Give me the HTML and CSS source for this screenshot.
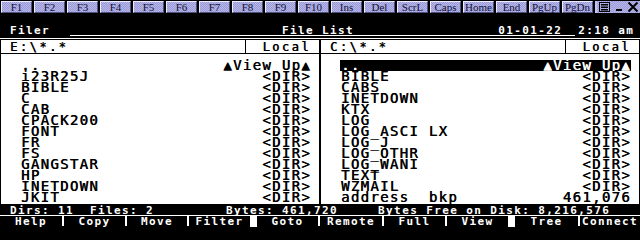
FILE: index.html
```html
<!DOCTYPE html>
<html>
<head>
<meta charset="utf-8">
<link rel="stylesheet" href="styles.css">
</head>
<body>
<div class="screen">
  <div class="toolbar">
    <span class="key">F1</span><span class="key">F2</span><span class="key">F3</span><span class="key">F4</span><span class="key">F5</span><span class="key">F6</span><span class="key">F7</span><span class="key">F8</span><span class="key">F9</span><span class="key">F10</span><span class="key">Ins</span><span class="key">Del</span><span class="key">ScrL</span><span class="key">Caps</span><span class="key">Home</span><span class="key">End</span><span class="key">PgUp</span><span class="key">PgDn</span>
    <div class="winctl">
      <span class="tsep"></span>
      <span class="wbtn menu"><svg width="15" height="12" viewBox="0 0 15 12"><rect x="2.5" y="1.5" width="10" height="9" fill="none" stroke="#000"/><rect x="4" y="3" width="7" height="1.5" fill="#000"/><rect x="4" y="5.5" width="7" height="1.5" fill="#000"/><rect x="4" y="8" width="7" height="1.5" fill="#000"/></svg></span>
      <span class="wbtn"><svg width="14" height="12" viewBox="0 0 14 12"><rect x="4" y="8" width="6" height="2" fill="#000"/></svg></span>
      <span class="wbtn"><svg width="14" height="12" viewBox="0 0 14 12"><path d="M2.5 1.5 L11.5 10.5 M11.5 1.5 L2.5 10.5" stroke="#000" stroke-width="2" fill="none"/></svg></span>
    </div>
  </div>
  <div class="title"> Filer                             File List                  01-01-22  2:18 am</div>
  <div class="rule"></div>
  <div class="panels">
    <section class="panel">
      <div class="phead"><span class="path">E:\*.*</span><span class="loc">Local</span></div>
      <ul class="list">
        <li><span>..</span><span>▲View Up▲</span></li>
        <li><span>i23R25J</span><span>&lt;DIR&gt;</span></li>
        <li><span>BIBLE</span><span>&lt;DIR&gt;</span></li>
        <li><span>C</span><span>&lt;DIR&gt;</span></li>
        <li><span>CAB</span><span>&lt;DIR&gt;</span></li>
        <li><span>CPACK200</span><span>&lt;DIR&gt;</span></li>
        <li><span>FONT</span><span>&lt;DIR&gt;</span></li>
        <li><span>FR</span><span>&lt;DIR&gt;</span></li>
        <li><span>FS</span><span>&lt;DIR&gt;</span></li>
        <li><span>GANGSTAR</span><span>&lt;DIR&gt;</span></li>
        <li><span>HP</span><span>&lt;DIR&gt;</span></li>
        <li><span>INETDOWN</span><span>&lt;DIR&gt;</span></li>
        <li><span>JKIT</span><span>&lt;DIR&gt;</span></li>
      </ul>
    </section>
    <section class="panel">
      <div class="phead"><span class="path">C:\*.*</span><span class="loc">Local</span></div>
      <ul class="list">
        <li class="sel"><span>..</span><span>▲View Up▲</span></li>
        <li><span>BIBLE</span><span>&lt;DIR&gt;</span></li>
        <li><span>CABS</span><span>&lt;DIR&gt;</span></li>
        <li><span>INETDOWN</span><span>&lt;DIR&gt;</span></li>
        <li><span>KTX</span><span>&lt;DIR&gt;</span></li>
        <li><span>LOG</span><span>&lt;DIR&gt;</span></li>
        <li><span>LOG_ASCI LX</span><span>&lt;DIR&gt;</span></li>
        <li><span>LOG_J</span><span>&lt;DIR&gt;</span></li>
        <li><span>LOG_OTHR</span><span>&lt;DIR&gt;</span></li>
        <li><span>LOG_WANI</span><span>&lt;DIR&gt;</span></li>
        <li><span>TEXT</span><span>&lt;DIR&gt;</span></li>
        <li><span>WZMAIL</span><span>&lt;DIR&gt;</span></li>
        <li><span>address  bkp</span><span>461,076</span></li>
      </ul>
    </section>
  </div>
  <div class="status"> Dirs: 11  Files: 2         Bytes: 461,720     Bytes Free on Disk: 8,216,576</div>
  <div class="fkeys">
    <span>Help</span><i class="fsep"></i>
    <span>Copy</span><i class="fsep"></i>
    <span>Move</span><i class="fsep"></i>
    <span>Filter</span><i class="fblk"></i>
    <span>Goto</span><i class="fsep"></i>
    <span>Remote</span><i class="fsep"></i>
    <span>Full</span><i class="fsep"></i>
    <span>View</span><i class="fblk"></i>
    <span>Tree</span><i class="fsep"></i>
    <span>Connect</span>
  </div>
</div>
</body>
</html>
```
FILE: styles.css
```css
* { box-sizing: border-box; margin: 0; padding: 0; }
html, body { background: #000; }
body { width: 640px; height: 240px; overflow: hidden; font-family: "DejaVu Sans Mono", monospace; }
.screen { width: 640px; height: 240px; background: #000; }

.toolbar { display: flex; gap: 2px; height: 13px; padding: 1px 0 0 1px; }
.key {
  width: 31px; height: 12px; flex: none;
  border: 1px solid; border-color: #ececff #50507c #50507c #ececff;
  background: repeating-conic-gradient(#b6b6ec 0 25%, #9c9cd4 0 50%) 0 0 / 2px 2px;
  font: 11px/10px "Liberation Serif", serif; color: #101038; text-align: center;
}
.winctl { display: flex; height: 12px; }
.tsep { width: 2px; background: #c4c4ee; }
.wbtn {
  display: flex; width: 14px; height: 12px;
  background: repeating-conic-gradient(#b6b6ec 0 25%, #9c9cd4 0 50%) 0 0 / 2px 2px;
}
.wbtn.menu { width: 15px; }

.title {
  margin-top: 13px; height: 9px; padding-left: 2px;
  font: bold 11px/10px "DejaVu Sans Mono", monospace; letter-spacing: 1.38px;
  color: #fff; white-space: pre;
}
.rule { margin: 0 0 2px 70px; width: 505px; height: 1px; background: #fff; }

.panels { display: flex; height: 167px; padding-top: 1px; background: #fff; }
.panel { width: 320px; height: 166px; border: 1px solid #000; display: flex; flex-direction: column; }
.phead {
  display: flex; height: 14px; border-bottom: 1px solid #000;
  font-size: 12px; line-height: 11px; letter-spacing: 2.5px; color: #000; white-space: pre;
  text-shadow: 0.5px 0 0 currentColor;
}
.path { width: 245px; flex: none; padding: 2px 0 0 9px; border-right: 1px solid #000; }
.loc { flex: 1; text-align: right; padding: 2px 8px 0 0; }

.list {
  list-style: none; padding: 6px 8px 0 19px;
  font-size: 14px; line-height: 11px; letter-spacing: 1.32px; color: #000;
  text-shadow: 0.6px 0 0 currentColor;
}
.list li { display: flex; justify-content: space-between; height: 11px; padding-left: 1px; white-space: pre; }
.list li.sel { background: #000; color: #fff; }

.status {
  height: 11px; padding: 1px 0 0 2px; border-bottom: 1px solid #fff;
  font: bold 11px/9px "DejaVu Sans Mono", monospace; letter-spacing: 1.38px;
  color: #fff; white-space: pre;
}
.fkeys {
  display: grid; height: 11px;
  grid-template-columns: 62px 2px 61px 2px 60px 2px 61px 7px 61px 2px 62px 2px 61px 2px 61px 7px 63px 2px 60px;
  font: bold 11px/11px "DejaVu Sans Mono", monospace; letter-spacing: 1.38px;
  color: #fff; text-align: center;
}
.fsep { background: #fff; height: 10px; }
.fblk { background: #fff; }
```
